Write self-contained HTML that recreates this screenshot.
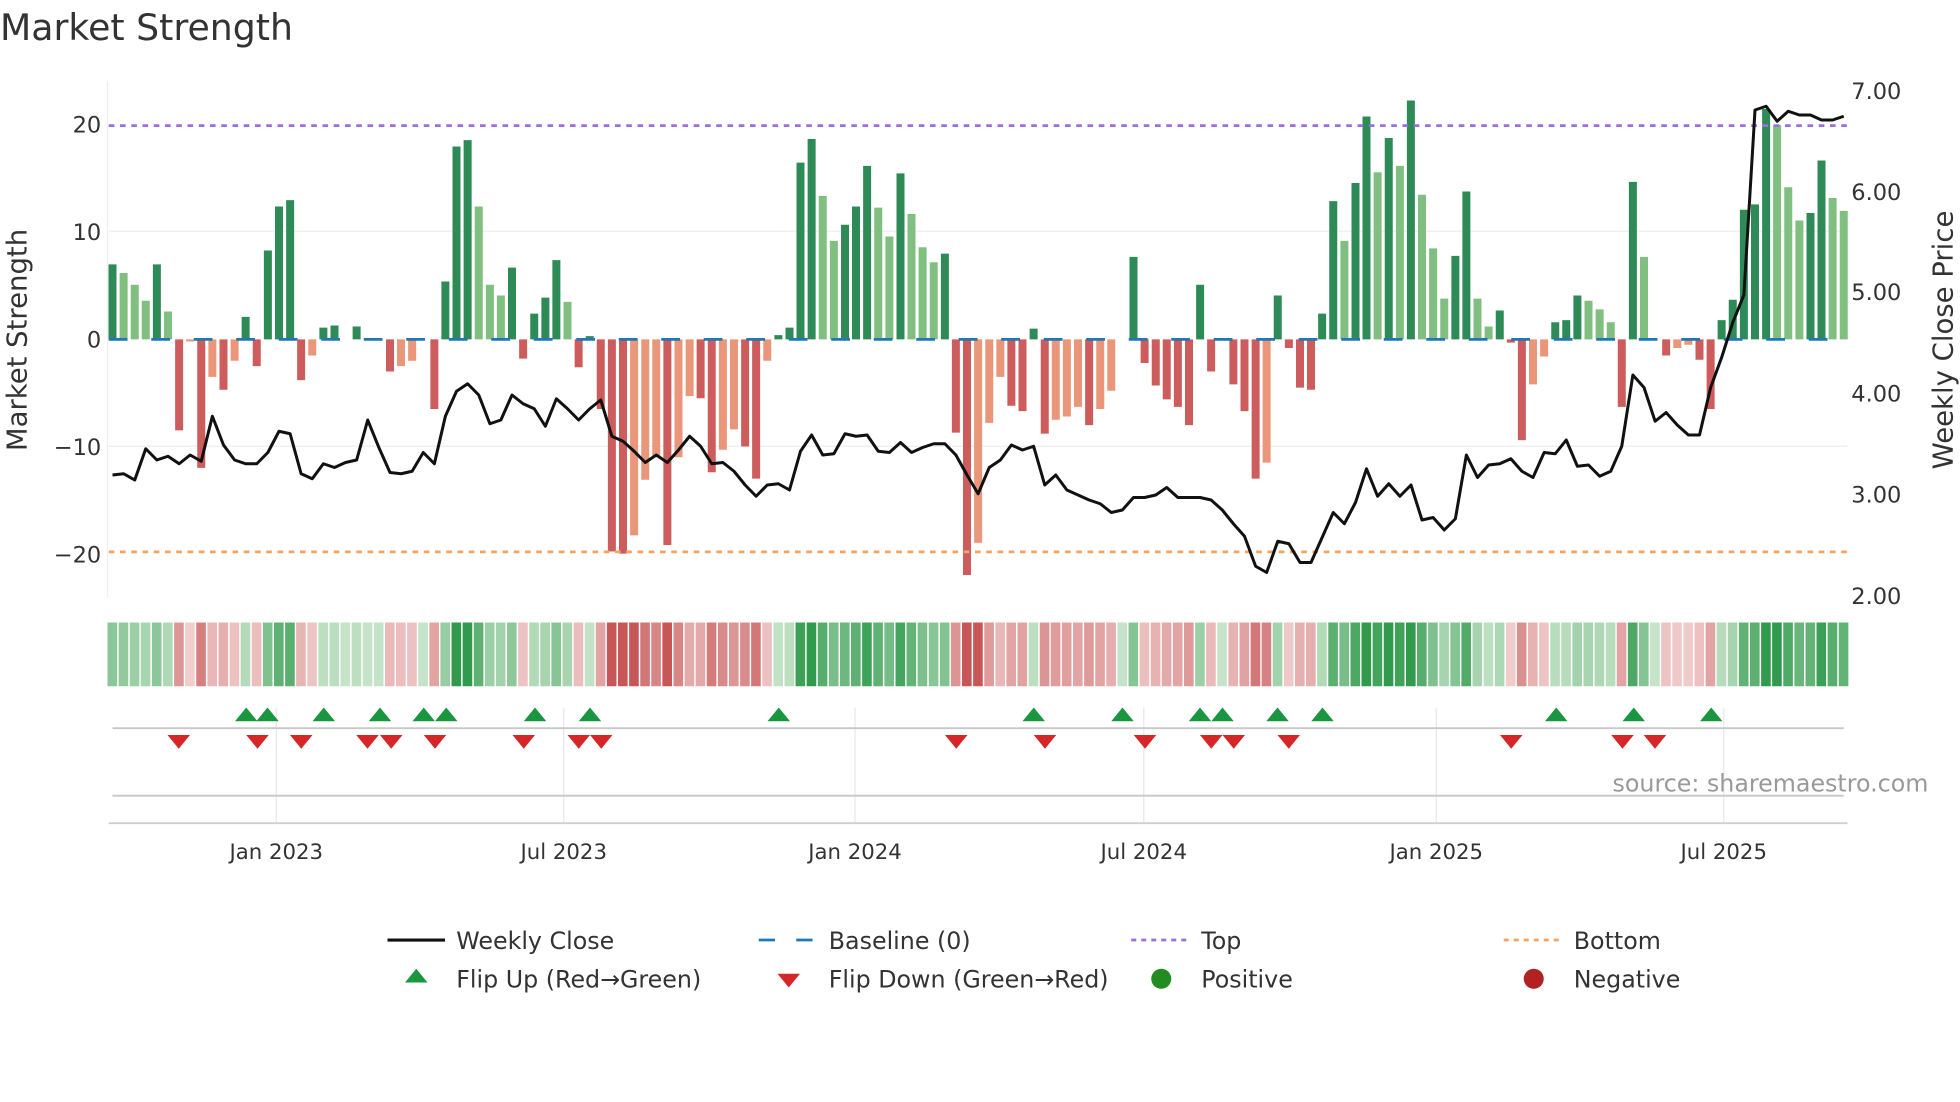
<!DOCTYPE html>
<html><head><meta charset="utf-8"><style>
html,body{margin:0;padding:0;background:#fff;width:1960px;height:1102px;overflow:hidden}
svg{display:block}
text{font-family:"DejaVu Sans","Liberation Sans",sans-serif;fill:#333}
</style></head><body>
<svg id="s" width="1960" height="1102" viewBox="0 0 1568 881.6" xmlns="http://www.w3.org/2000/svg">
<rect width="1568" height="882" fill="#fff"/>
<text x="0" y="32" font-size="29">Market Strength</text>
<line x1="86" y1="65" x2="86" y2="478" stroke="#eef0f4"/>
<line x1="87" y1="185" x2="1478" y2="185" stroke="#eeeeee"/>
<line x1="87" y1="357" x2="1478" y2="357" stroke="#eeeeee"/>
<g id="bars"></g>
<line x1="87" y1="100.5" x2="1478" y2="100.5" stroke="#9b6fdc" stroke-width="2.2" stroke-dasharray="4.5 4.5"/>
<line x1="87" y1="441.5" x2="1478" y2="441.5" stroke="#f4a460" stroke-width="2.2" stroke-dasharray="4.5 4.5"/>
<line x1="87" y1="271.5" x2="1478" y2="271.5" stroke="#1f77b4" stroke-width="2.2" stroke-dasharray="15 19"/>
<polyline id="price" fill="none" stroke="#111" stroke-width="2.4" stroke-linejoin="round"/>
<g font-size="18" text-anchor="end">
<text x="81" y="106">20</text><text x="81" y="192">10</text><text x="81" y="278">0</text><text x="81" y="364">−10</text><text x="81" y="450">−20</text>
</g>
<g font-size="18">
<text x="1481" y="79">7.00</text><text x="1481" y="160">6.00</text><text x="1481" y="240">5.00</text><text x="1481" y="321">4.00</text><text x="1481" y="402">3.00</text><text x="1481" y="483">2.00</text>
</g>
<text transform="translate(21,272) rotate(-90)" font-size="22" text-anchor="middle">Market Strength</text>
<text transform="translate(1562,272) rotate(-90)" font-size="22" text-anchor="middle">Weekly Close Price</text>
<g id="heat"></g>
<g stroke="#e6e8ec">
<line x1="221" y1="566" x2="221" y2="658"/><line x1="451" y1="566" x2="451" y2="658"/><line x1="684" y1="566" x2="684" y2="658"/><line x1="915" y1="566" x2="915" y2="658"/><line x1="1149" y1="566" x2="1149" y2="658"/><line x1="1379" y1="566" x2="1379" y2="658"/>
</g>
<line x1="90" y1="582.5" x2="1475" y2="582.5" stroke="#c8c8c8" stroke-width="1.5"/>
<line x1="90" y1="636.5" x2="1475" y2="636.5" stroke="#c8c8c8" stroke-width="1.5"/>
<line x1="87" y1="658.5" x2="1478" y2="658.5" stroke="#cfcfcf" stroke-width="1.5"/>
<g id="tri"></g>
<text x="1290" y="633" font-size="19" fill="#999" style="fill:#999">source: sharemaestro.com</text>
<g font-size="17" text-anchor="middle">
<text x="221" y="687">Jan 2023</text><text x="451" y="687">Jul 2023</text><text x="684" y="687">Jan 2024</text><text x="915" y="687">Jul 2024</text><text x="1149" y="687">Jan 2025</text><text x="1379" y="687">Jul 2025</text>
</g>
<g font-size="19">
<line x1="310" y1="752" x2="356" y2="752" stroke="#111" stroke-width="2.5"/><text x="365" y="759">Weekly Close</text>
<line x1="607" y1="752" x2="653" y2="752" stroke="#1f77b4" stroke-width="2.2" stroke-dasharray="13 17"/><text x="663" y="759">Baseline (0)</text>
<line x1="905" y1="752" x2="951" y2="752" stroke="#9b6fdc" stroke-width="2.2" stroke-dasharray="4 4"/><text x="961" y="759">Top</text>
<line x1="1203" y1="752" x2="1249" y2="752" stroke="#f4a460" stroke-width="2.2" stroke-dasharray="4 4"/><text x="1259" y="759">Bottom</text>
<polygon points="333,775 342,786 324,786" fill="#1a9641"/><text x="365" y="790">Flip Up (Red→Green)</text>
<polygon points="622,779 640,779 631,790" fill="#d62728"/><text x="663" y="790">Flip Down (Green→Red)</text>
<circle cx="929" cy="783" r="8" fill="#228b22"/><text x="961" y="790">Positive</text>
<circle cx="1227" cy="783" r="8" fill="#b22222"/><text x="1259" y="790">Negative</text>
</g>
</svg>
<script>
var V=[7,6.2,5.1,3.6,7,2.6,-8.5,-0.2,-12,-3.5,-4.7,-2,2.1,-2.5,8.3,12.4,13,-3.8,-1.5,1.1,1.3,0,1.2,0,0,-3,-2.5,-2,0,-6.5,5.4,18,18.6,12.4,5.1,4.1,6.7,-1.8,2.4,3.9,7.4,3.5,-2.6,0.3,-6.5,-19.8,-20,-18.3,-13.1,-11,-19.2,-11,-5.3,-5.5,-12.4,-10.3,-8.4,-10,-13,-2,0.4,1.1,16.5,18.7,13.4,9.2,10.7,12.4,16.2,12.3,9.6,15.5,11.7,8.6,7.2,8,-8.7,-22,-19,-7.8,-3.5,-6.2,-6.7,1,-8.8,-7.5,-7.2,-6.3,-8,-6.5,-4.8,0,7.7,-2.2,-4.3,-5.6,-6.3,-8,5.1,-3,0,-4.2,-6.7,-13,-11.5,4.1,-0.8,-4.5,-4.7,2.4,12.9,9.2,14.6,20.8,15.6,18.8,16.2,22.3,13.5,8.5,3.8,7.8,13.8,3.8,1.2,2.7,-0.3,-9.4,-4.2,-1.6,1.6,1.8,4.1,3.6,2.8,1.6,-6.3,14.7,7.7,0,-1.5,-0.8,-0.5,-1.9,-6.5,1.8,3.7,12.1,12.6,21.5,20,14.2,11.1,11.8,16.7,13.2,12];
var P=[380,379,384,359,368,365,371,364,369,333,356,368,371,371,362,345,347,379,383,371,374,370,368,336,358,378,379,377,362,371,333,313,307,316,339,336,316,323,327,341,319,327,336,327,320,349,353,361,370,364,370,360,349,357,371,370,377,388,397,388,387,392,361,348,364,363,347,349,348,361,362,354,362,358,355,355,364,380,395,374,368,356,360,357,388,380,392,396,400,403,410,408,398,398,396,390,398,398,398,400,408,419,429,453,458,433,435,450,450,430,410,419,402,375,397,387,397,388,416,414,424,415,364,382,372,371,367,377,382,362,363,352,373,372,381,377,357,300,310,337,330,340,348,348,310,286,258,236,88,85,97,89,92,92,96,96,93];
var N=V.length,x0=90,x1=1475,dx=(x1-x0)/(N-1),z=271.5,k=8.57,h='',hm='',ns='';
function mix(a,b,t){return 'rgb('+a.map(function(c,i){return Math.round(c+(b[i]-c)*t)}).join(',')+')'}
for(var i=0;i<N;i++){var v=V[i],p=i?V[i-1]:0,x=x0+i*dx-3.2,c;
 if(v>=0)c=(v<p)?'#80bf80':'#2e8b57';else c=(v>p)?'#e9967a':'#cd5c5c';
 var hh=Math.abs(v)*k;if(hh>0.3)h+='<rect x="'+x.toFixed(1)+'" y="'+(v>=0?z-hh:z).toFixed(1)+'" width="6.4" height="'+hh.toFixed(1)+'" fill="'+c+'"/>';
 var t=Math.min(1,Math.abs(v)/18)*0.85+0.1;
 var hc=v>=0?mix([214,236,214],[40,150,70],t):mix([246,220,220],[196,80,80],t);
 hm+='<rect x="'+(x0+i*dx-4).toFixed(1)+'" y="498" width="'+(dx-1.2).toFixed(1)+'" height="51" fill="'+hc+'"/>';}
document.getElementById('bars').innerHTML=h;document.getElementById('heat').innerHTML=hm;
var pts=[];var M=P.length,pdx=(x1-x0)/(M-1);for(var j=0;j<M;j++)pts.push((x0+j*pdx).toFixed(1)+','+P[j]);
document.getElementById('price').setAttribute('points',pts.join(' '));
var U=[197,214,259,304,339,357,428,472,623,827,898,960,978,1022,1058,1245,1307,1369],D=[143,206,241,294,313,348,419,463,481,765,836,916,969,987,1031,1209,1298,1324],t='';
U.forEach(function(x){t+='<polygon points="'+x+',566 '+(x+9)+',577 '+(x-9)+',577" fill="#1a9641"/>'});
D.forEach(function(x){t+='<polygon points="'+(x-9)+',588 '+(x+9)+',588 '+x+',599" fill="#d62728"/>'});
document.getElementById('tri').innerHTML=t;
</script>
</body></html>
